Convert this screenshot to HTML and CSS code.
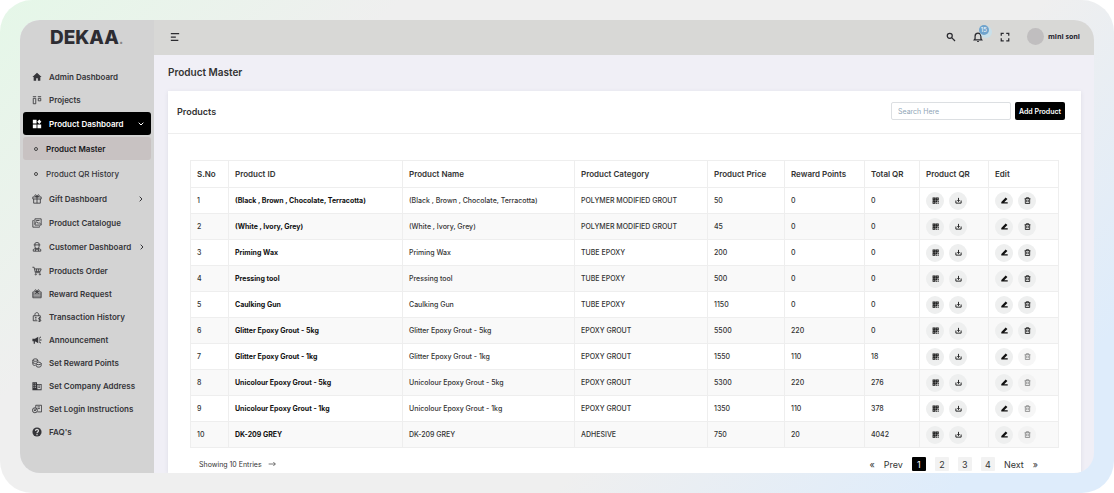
FILE: index.html
```html
<!DOCTYPE html>
<html lang="en">
<head>
    <meta charset="UTF-8">
    <meta name="viewport" content="width=device-width, initial-scale=1.0">
    <title>Product Master</title>
    <link rel="stylesheet" href="styles.css">
</head>
<body>
    <!-- Icons shared by the table rows -->
    <svg class="sprite" aria-hidden="true">
        <symbol id="qr" viewBox="0 0 12 12">
            <path fill-rule="evenodd" d="M1 1h5v5H1zM2.5 2.5V4H4V2.5zM6.5 1h5v5h-5zM8 2.5V4h2V2.5zM1 6.5h5v5H1zM2.5 8v2H4V8zM6.500 6.500h2v2h-2zM9.500 7h2v1.500h-2zM7 9.500h2v2H7zM10 9.500h1.500v2H10z"/>
        </symbol>
        <symbol id="download" viewBox="0 0 12 12">
            <path d="M1.5 6v4.500h9V6M6 1.5v6M4 5.500l2 2.200 2-2.200" fill="none" stroke="currentColor" stroke-width="1.5"/>
        </symbol>
        <symbol id="edit" viewBox="0 0 12 12">
            <path d="M.5 11V8.500L8 .8l3 2.800-5.500 5.200h6V11z"/>
        </symbol>
        <symbol id="trash" viewBox="0 0 12 12">
            <path d="M1 3h10M4 3V1.200h4V3M2.300 3v8.200h7.400V3M4.700 5v4M7.300 5v4" fill="none" stroke="currentColor" stroke-width="1.4"/>
        </symbol>
    </svg>

    <div class="frame">
        <div class="app">
            <aside class="sidebar">
                <a class="logo" href="#">DEKAA<span>.</span></a>
                <nav>
                    <a class="item" href="#">
                        <svg viewBox="0 0 24 24"><path d="M12 2L1 12h3v9h6v-6h4v6h6v-9h3z"/></svg>
                        Admin Dashboard
                    </a>
                    <a class="item" href="#">
                        <svg class="line" viewBox="0 0 24 24"><path d="M2 4h8M14 4h8M3 8h6v13H3zM15 8h6v6h-6z"/></svg>
                        Projects
                    </a>
                    <a class="item parent active" href="#">
                        <svg viewBox="0 0 24 24"><path d="M2 2h9v9H2zM2 13h9v9H2zM13 13h9v9h-9zM17.5 1l5 5.500-5 5.500-5-5.500z"/></svg>
                        Product Dashboard
                        <svg class="arrow" viewBox="0 0 24 24"><path d="M5 8l7 7 7-7"/></svg>
                    </a>
                    <div class="submenu">
                        <a class="item current" href="#">Product Master</a>
                        <a class="item" href="#">Product QR History</a>
                    </div>
                    <a class="item parent" href="#">
                        <svg class="line" viewBox="0 0 24 24"><path d="M2 7h20v5H2zM4 12v10h16V12M12 7v15M12 7C5 7 6 1 9 2s3 5 3 5 0-4 3-5 4 5-3 5"/></svg>
                        Gift Dashboard
                        <svg class="arrow" viewBox="0 0 24 24"><path d="M8 5l7 7-7 7"/></svg>
                    </a>
                    <a class="item" href="#">
                        <svg class="line" viewBox="0 0 24 24"><path d="M7 2h15v15H7zM4 6H2v16h16v-2M7 14l4-5 4 4 2-2 4 4M10 6h8"/></svg>
                        Product Catalogue
                    </a>
                    <a class="item parent" href="#">
                        <svg class="line" viewBox="0 0 24 24"><path d="M7 7V3l5-2 5 2v4M4 7h16M7 7v4c0 6 10 6 10 0V7M3 22v-4l6-3 3 4 3-4 6 3v4zM9 15l-1 7M15 15l1 7"/></svg>
                        Customer Dashboard
                        <svg class="arrow" viewBox="0 0 24 24"><path d="M8 5l7 7-7 7"/></svg>
                    </a>
                    <a class="item" href="#">
                        <svg class="line" viewBox="0 0 24 24"><path d="M1 3h4l3 13h12M6 7h16l-2 6H8M11 7v6M16 7v6"/><circle cx="9" cy="20" r="1.5"/><circle cx="19" cy="20" r="1.5"/></svg>
                        Products Order
                    </a>
                    <a class="item" href="#">
                        <svg class="line" viewBox="0 0 24 24"><path d="M2 7h20v14H2zM2 17h20M2 12h20M12 7l-4 5M12 7l4 5M12 7C5 7 6 1 9 2s3 5 3 5 0-4 3-5 4 5-3 5"/></svg>
                        Reward Request
                    </a>
                    <a class="item" href="#">
                        <svg class="line" viewBox="0 0 24 24"><path d="M13 21H3V9h17v3M7 9V6c0-6 9-6 9 0v3M7 13h4M7 17h4M22 14h-4c-3 0-3 4 0 4h1c3 0 3 4 0 4h-4M18.5 12v12"/></svg>
                        Transaction History
                    </a>
                    <a class="item" href="#">
                        <svg viewBox="0 0 24 24"><path d="M1 9h6l8-5v16l-8-5v6H4v-6H1zM17 11h6v2h-6zM16.5 7.500l4-4L22 5l-4 4zM16.5 16.5l4 4L22 19l-4-4z"/></svg>
                        Announcement
                    </a>
                    <a class="item" href="#">
                        <svg class="line" viewBox="0 0 24 24"><path d="M2 5c0-4 12-4 12 0s-12 4-12 0v10c0 2 3 3 6 3M2 10c0 2 3 3 6 3M14 5v4M10 13c0-4 12-4 12 0s-12 4-12 0v6c0 4 12 4 12 0v-6"/></svg>
                        Set Reward Points
                    </a>
                    <a class="item" href="#">
                        <svg viewBox="0 0 24 24"><path fill-rule="evenodd" d="M1 3h11v4h11v15H1zM13 9v11h8V9zM3.5 6v2h2V6zM7.500 6v2h2V6zM3.5 10v2h2v-2zM7.500 10v2h2v-2zM3.5 14v2h2v-2zM7.500 14v2h2v-2zM15 11h4v2h-4zM15 15h4v2h-4z"/></svg>
                        Set Company Address
                    </a>
                    <a class="item" href="#">
                        <svg class="line" viewBox="0 0 24 24"><path d="M9 9V3h14v16H13M13 7h6M14 11h5"/><circle cx="7" cy="15" r="6"/><path d="M7 11v5M4 14l3 3 5-7"/></svg>
                        Set Login Instructions
                    </a>
                    <a class="item" href="#">
                        <svg viewBox="0 0 24 24"><circle cx="12" cy="12" r="11"/><path class="mark" d="M8.5 9.500c0-5 7-5 7-.5 0 3-3.500 3-3.500 6M12 17v2.500"/></svg>
                        FAQ's
                    </a>
                </nav>
            </aside>

            <div class="page">
                <header class="topbar">
                    <button class="icon-btn" aria-label="Toggle menu">
                        <svg viewBox="0 0 12 12"><path d="M1 2h10M1 6h6M1 10h9"/></svg>
                    </button>
                    <div class="tools">
                        <button class="icon-btn" aria-label="Search">
                            <svg viewBox="0 0 12 12"><circle cx="4.500" cy="4.500" r="3"/><path d="M6.800 6.800l4 4"/></svg>
                        </button>
                        <button class="icon-btn bell" aria-label="Notifications">
                            <svg viewBox="0 0 12 12"><path d="M1.5 9.500h9L9.500 8V5c0-5-7-5-7 0v3zM5 11.500h2M6 .5v1"/></svg>
                            <span class="badge">15</span>
                        </button>
                        <button class="icon-btn" aria-label="Full screen">
                            <svg viewBox="0 0 12 12"><path d="M1.5 4.500v-3h3M7.500 1.5h3v3M10.500 7.500v3h-3M4.500 10.500h-3v-3"/></svg>
                        </button>
                        <a class="user" href="#"><span class="avatar"></span>mini soni</a>
                    </div>
                </header>

                <main>
                    <h1>Product Master</h1>
                    <section class="card">
                        <div class="card-header">
                            <h2>Products</h2>
                            <input type="search" placeholder="Search Here" aria-label="Search products">
                            <button class="add">Add Product</button>
                        </div>
                        <div class="card-body">
                            <table>
                                <colgroup>
                                    <col class="c-no"><col class="c-id"><col class="c-name"><col class="c-cat"><col class="c-price"><col class="c-points"><col class="c-total"><col class="c-qr"><col class="c-edit">
                                </colgroup>
                                <thead>
                                    <tr>
                                        <th>S.No</th><th>Product ID</th><th>Product Name</th><th>Product Category</th><th>Product Price</th><th>Reward Points</th><th>Total QR</th><th>Product QR</th><th>Edit</th>
                                    </tr>
                                </thead>
                                <tbody>
                                    <tr>
                                        <td>1</td><td>(Black , Brown , Chocolate, Terracotta)</td><td>(Black , Brown , Chocolate, Terracotta)</td><td>POLYMER MODIFIED GROUT</td><td>50</td><td>0</td><td>0</td>
                                        <td><div class="actions"><button aria-label="Show QR"><svg><use href="#qr"/></svg></button><button aria-label="Download"><svg><use href="#download"/></svg></button></div></td>
                                        <td><div class="actions"><button aria-label="Edit"><svg><use href="#edit"/></svg></button><button aria-label="Delete"><svg><use href="#trash"/></svg></button></div></td>
                                    </tr>
                                    <tr>
                                        <td>2</td><td>(White , Ivory, Grey)</td><td>(White , Ivory, Grey)</td><td>POLYMER MODIFIED GROUT</td><td>45</td><td>0</td><td>0</td>
                                        <td><div class="actions"><button aria-label="Show QR"><svg><use href="#qr"/></svg></button><button aria-label="Download"><svg><use href="#download"/></svg></button></div></td>
                                        <td><div class="actions"><button aria-label="Edit"><svg><use href="#edit"/></svg></button><button aria-label="Delete"><svg><use href="#trash"/></svg></button></div></td>
                                    </tr>
                                    <tr>
                                        <td>3</td><td>Priming Wax</td><td>Priming Wax</td><td>TUBE EPOXY</td><td>200</td><td>0</td><td>0</td>
                                        <td><div class="actions"><button aria-label="Show QR"><svg><use href="#qr"/></svg></button><button aria-label="Download"><svg><use href="#download"/></svg></button></div></td>
                                        <td><div class="actions"><button aria-label="Edit"><svg><use href="#edit"/></svg></button><button aria-label="Delete"><svg><use href="#trash"/></svg></button></div></td>
                                    </tr>
                                    <tr>
                                        <td>4</td><td>Pressing tool</td><td>Pressing tool</td><td>TUBE EPOXY</td><td>500</td><td>0</td><td>0</td>
                                        <td><div class="actions"><button aria-label="Show QR"><svg><use href="#qr"/></svg></button><button aria-label="Download"><svg><use href="#download"/></svg></button></div></td>
                                        <td><div class="actions"><button aria-label="Edit"><svg><use href="#edit"/></svg></button><button aria-label="Delete"><svg><use href="#trash"/></svg></button></div></td>
                                    </tr>
                                    <tr>
                                        <td>5</td><td>Caulking Gun</td><td>Caulking Gun</td><td>TUBE EPOXY</td><td>1150</td><td>0</td><td>0</td>
                                        <td><div class="actions"><button aria-label="Show QR"><svg><use href="#qr"/></svg></button><button aria-label="Download"><svg><use href="#download"/></svg></button></div></td>
                                        <td><div class="actions"><button aria-label="Edit"><svg><use href="#edit"/></svg></button><button aria-label="Delete"><svg><use href="#trash"/></svg></button></div></td>
                                    </tr>
                                    <tr>
                                        <td>6</td><td>Glitter Epoxy Grout - 5kg</td><td>Glitter Epoxy Grout - 5kg</td><td>EPOXY GROUT</td><td>5500</td><td>220</td><td>0</td>
                                        <td><div class="actions"><button aria-label="Show QR"><svg><use href="#qr"/></svg></button><button aria-label="Download"><svg><use href="#download"/></svg></button></div></td>
                                        <td><div class="actions"><button aria-label="Edit"><svg><use href="#edit"/></svg></button><button aria-label="Delete"><svg><use href="#trash"/></svg></button></div></td>
                                    </tr>
                                    <tr>
                                        <td>7</td><td>Glitter Epoxy Grout - 1kg</td><td>Glitter Epoxy Grout - 1kg</td><td>EPOXY GROUT</td><td>1550</td><td>110</td><td>18</td>
                                        <td><div class="actions"><button aria-label="Show QR"><svg><use href="#qr"/></svg></button><button aria-label="Download"><svg><use href="#download"/></svg></button></div></td>
                                        <td><div class="actions"><button aria-label="Edit"><svg><use href="#edit"/></svg></button><button aria-label="Delete" disabled><svg><use href="#trash"/></svg></button></div></td>
                                    </tr>
                                    <tr>
                                        <td>8</td><td>Unicolour Epoxy Grout - 5kg</td><td>Unicolour Epoxy Grout - 5kg</td><td>EPOXY GROUT</td><td>5300</td><td>220</td><td>276</td>
                                        <td><div class="actions"><button aria-label="Show QR"><svg><use href="#qr"/></svg></button><button aria-label="Download"><svg><use href="#download"/></svg></button></div></td>
                                        <td><div class="actions"><button aria-label="Edit"><svg><use href="#edit"/></svg></button><button aria-label="Delete" disabled><svg><use href="#trash"/></svg></button></div></td>
                                    </tr>
                                    <tr>
                                        <td>9</td><td>Unicolour Epoxy Grout - 1kg</td><td>Unicolour Epoxy Grout - 1kg</td><td>EPOXY GROUT</td><td>1350</td><td>110</td><td>378</td>
                                        <td><div class="actions"><button aria-label="Show QR"><svg><use href="#qr"/></svg></button><button aria-label="Download"><svg><use href="#download"/></svg></button></div></td>
                                        <td><div class="actions"><button aria-label="Edit"><svg><use href="#edit"/></svg></button><button aria-label="Delete" disabled><svg><use href="#trash"/></svg></button></div></td>
                                    </tr>
                                    <tr>
                                        <td>10</td><td>DK-209 GREY</td><td>DK-209 GREY</td><td>ADHESIVE</td><td>750</td><td>20</td><td>4042</td>
                                        <td><div class="actions"><button aria-label="Show QR"><svg><use href="#qr"/></svg></button><button aria-label="Download"><svg><use href="#download"/></svg></button></div></td>
                                        <td><div class="actions"><button aria-label="Edit"><svg><use href="#edit"/></svg></button><button aria-label="Delete" disabled><svg><use href="#trash"/></svg></button></div></td>
                                    </tr>
                                </tbody>
                            </table>
                            <div class="table-footer">
                                <p>Showing 10 Entries
                                    <svg viewBox="0 0 12 12"><path d="M1 6h10M8 3l3 3-3 3"/></svg>
                                </p>
                                <div class="pagination">
                                    <button>«</button>
                                    <button>Prev</button>
                                    <button class="num on">1</button>
                                    <button class="num">2</button>
                                    <button class="num">3</button>
                                    <button class="num">4</button>
                                    <button>Next</button>
                                    <button>»</button>
                                </div>
                            </div>
                        </div>
                    </section>
                </main>
            </div>
        </div>
    </div>
</body>
</html>
```
FILE: styles.css
```css
*, *::before {
    box-sizing: border-box;
}
body {
    margin: 0;
    background: #fff;
    font-family: Inter, "Liberation Sans", sans-serif;
    font-size: 8px;
    color: #333;
}
h1, h2, p {
    margin: 0;
}
a {
    color: inherit;
    text-decoration: none;
}
button {
    font: inherit;
    color: inherit;
    border: none;
    padding: 0;
    background: none;
    cursor: pointer;
}
svg {
    fill: currentColor;
    flex: none;
}
.sprite {
    display: none;
}
.frame {
    display: flex;
    min-height: 100vh;
    padding: 20px;
    border-radius: 32px;
    background: linear-gradient(135deg, #e5f7e8 0%, #efefef 25%, #efefef 65%, #deecfb 90%);
}
.app {
    display: flex;
    flex: 1;
    min-width: 0;
    border-radius: 20px;
    overflow: hidden;
    background: #f0eff6;
}

/* Sidebar */
.sidebar {
    width: 134px;
    flex: none;
    padding: 0 3px;
    background: #d3d3d3;
}
.logo {
    display: block;
    height: 45px;
    padding-left: 27px;
    font-size: 19px;
    line-height: 35px;
    font-weight: 800;
    color: #2e2d33;
}
.logo span {
    font-size: 12px;
    color: #888;
}
.item {
    display: flex;
    align-items: center;
    gap: 7px;
    height: 23px;
    padding: 0 6px 0 9px;
    border-radius: 3px;
    font-weight: 600;
    white-space: nowrap;
    color: #353539;
}
.item svg {
    width: 10px;
    height: 10px;
}
.item svg.line, .item svg.arrow {
    fill: none;
    stroke: currentColor;
    stroke-width: 2;
}
.item svg.arrow {
    width: 8px;
    height: 8px;
    margin-left: auto;
    stroke-width: 3;
}
.item .mark {
    fill: none;
    stroke: #d3d3d3;
    stroke-width: 3;
}
.parent {
    margin: 1px 0;
}
.active {
    background: #000;
    color: #fff;
}
.submenu {
    display: grid;
    gap: 2px;
    padding: 1px 0;
}
.submenu .item {
    padding-left: 11px;
    gap: 8px;
    font-weight: 500;
}
.submenu .item::before {
    content: "";
    width: 4px;
    height: 4px;
    border: 1px solid #444;
    border-radius: 50%;
}
.submenu .current {
    background: #c8c2c2;
    font-weight: 600;
    color: #17171a;
}

/* Top bar */
.page {
    flex: 1;
    min-width: 0;
    display: flex;
    flex-direction: column;
}
.topbar {
    display: flex;
    align-items: center;
    justify-content: space-between;
    height: 35px;
    padding: 0 14px 2px 16px;
    background: #d8d8d6;
}
.tools {
    display: flex;
    align-items: center;
    gap: 17px;
}
.icon-btn {
    display: flex;
    position: relative;
    color: #2b2b30;
}
.icon-btn svg {
    width: 10px;
    height: 10px;
    fill: none;
    stroke: currentColor;
    stroke-width: 1.5;
}
.badge {
    position: absolute;
    top: -7px;
    right: -6px;
    width: 10px;
    height: 10px;
    border-radius: 50%;
    background: #6fa3cc;
    box-shadow: 2px 2px 0 1px #c9e0ea;
    font-size: 6px;
    line-height: 10px;
    text-align: center;
    color: #fff;
}
.user {
    display: flex;
    align-items: center;
    gap: 4px;
    font-family: "Open Sans", sans-serif;
    font-size: 7px;
    font-weight: 700;
    color: #1c1c2c;
}
.avatar {
    width: 17px;
    height: 17px;
    border-radius: 50%;
    background: #c0bebf;
}

/* Content */
main {
    flex: 1;
    display: flex;
    flex-direction: column;
    padding: 0 13px 0 14px;
}
h1 {
    font-size: 10px;
    line-height: 14px;
    font-weight: 600;
    padding: 10px 0 12px;
}
.card {
    flex: 1;
    background: #fff;
    box-shadow: 0 1px 4px #dcdce4;
}
.card-header {
    display: flex;
    align-items: center;
    gap: 4px;
    height: 43px;
    padding: 0 16px 2px 9px;
    border-bottom: 1px solid #eee;
}
h2 {
    flex: 1;
    font-size: 9px;
    font-weight: 600;
}
.card-header input {
    width: 120px;
    height: 18px;
    padding: 0 6px;
    border: 1px solid #dcdfe2;
    border-radius: 2px;
    background: #fff;
    font: inherit;
    font-size: 7px;
}
.card-header input::placeholder {
    color: #8fa5b6;
}
.add {
    width: 50px;
    height: 18px;
    border-radius: 2px;
    background: #000;
    color: #fff;
    font-size: 7px;
    font-weight: 600;
}
.card-body {
    padding: 26px 22px 0;
}
table {
    width: 100%;
    table-layout: fixed;
    border-collapse: collapse;
}
.c-no { width: 38px; }
.c-id { width: 174px; }
.c-name { width: 172px; }
.c-cat { width: 133px; }
.c-price { width: 77px; }
.c-points { width: 80px; }
.c-total { width: 55px; }
.c-qr { width: 69px; }
.c-edit { width: 70px; }
th, td {
    height: 26px;
    padding: 0 0 0 6px;
    border: 1px solid #eee;
    text-align: left;
    white-space: nowrap;
}
th {
    height: 27px;
    font-size: 8px;
    font-weight: 600;
}
td {
    font-size: 7px;
    font-weight: 500;
}
td:nth-child(2) {
    font-weight: 700;
    color: #111;
}
tbody tr:nth-child(even) {
    background: #f9f9f9;
}
.actions {
    display: flex;
    gap: 5px;
}
.actions button {
    display: grid;
    place-items: center;
    width: 18px;
    height: 18px;
    border-radius: 50%;
    background: #eeefef;
    color: #111;
}
.actions button:disabled {
    opacity: 0.5;
}
.actions svg {
    width: 7px;
    height: 7px;
}
.table-footer {
    display: flex;
    align-items: center;
    justify-content: space-between;
    height: 18px;
    margin-top: 7px;
    padding: 0 21px 0 9px;
}
.table-footer p {
    display: flex;
    align-items: center;
    gap: 6px;
    font-size: 7px;
}
.table-footer p svg {
    width: 8px;
    height: 8px;
    fill: none;
    stroke: currentColor;
}
.pagination {
    display: flex;
    align-items: center;
    gap: 9px;
    font-size: 9px;
}
.num {
    width: 14px;
    height: 14px;
    border-radius: 1px;
    background: #f2f2f2;
}
.num.on {
    background: #000;
    color: #fff;
}
```
